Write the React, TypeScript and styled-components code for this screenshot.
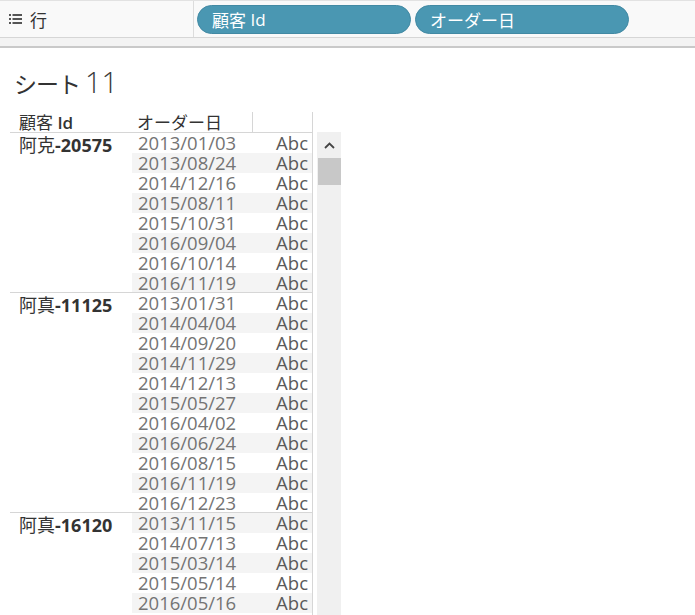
import React from "react";
import styled, { createGlobalStyle } from "styled-components";

const GlobalStyle = createGlobalStyle`
  html, body { margin: 0; padding: 0; background: #fff; overflow: hidden; }
  body { font-family: "Open Sans", "Noto Sans CJK JP", sans-serif; color: #333; }
`;

const Page = styled.div`
  width: 695px;
  height: 615px;
  overflow: hidden;
  display: flex;
  flex-direction: column;
`;

const ShelfBar = styled.div`
  height: 36px;
  border-top: 1px solid #e2e2e2;
  border-bottom: 1px solid #d6d6d6;
  background: #f9f9f9;
  display: flex;
  align-items: stretch;
`;

const ShelfLabel = styled.div`
  width: 194px;
  border-right: 1px solid #dcdcdc;
  display: flex;
  align-items: center;
  gap: 8px;
  padding-left: 9px;
  box-sizing: border-box;
  font-size: 17px;
  color: #333;
  font-family: "Noto Sans CJK JP", sans-serif;
`;

const Pills = styled.div`
  display: flex;
  align-items: center;
  gap: 4px;
  padding-left: 3px;
`;

const Pill = styled.div`
  width: 214px;
  height: 29px;
  box-sizing: border-box;
  border-radius: 15px;
  background: #4a97b2;
  border: 1px solid #4289a3;
  color: #fff;
  font-size: 17px;
  display: flex;
  align-items: center;
  padding-left: 14px;
  font-family: "Open Sans", "Noto Sans CJK JP", sans-serif;
`;

const Band = styled.div`
  height: 8px;
  background: #f3f3f3;
  border-bottom: 2px solid #c9c9c9;
`;

const Title = styled.div`
  padding: 16px 0 0 14px;
  height: 36px;
  line-height: 36px;
  font-size: 29px;
  font-weight: 300;
  color: #3a3a3a;
  margin-bottom: 12px;
  font-family: "Open Sans", "Noto Sans CJK JP", sans-serif;
`;

const TitleCjk = styled.span`
  font-family: "Noto Sans CJK JP", sans-serif;
  font-size: 23px;
  font-weight: 400;
  letter-spacing: -1px;
  margin-right: 5px;
  color: #333;
`;

const Sheet = styled.div`
  display: flex;
  align-items: flex-start;
  padding-left: 10px;
  flex: 1;
  min-height: 0;
`;

const Table = styled.div`
  width: 302px;
  border-right: 1px solid #d6d6d6;
`;

const HeaderRow = styled.div`
  display: grid;
  grid-template-columns: 122px 120px 60px;
  height: 21px;
  box-sizing: border-box;
  border-bottom: 1px solid #d6d6d6;
  font-size: 17px;
  line-height: 20px;
  color: #333;
`;

const HeaderCell = styled.div<{ $pad: number; $divider?: boolean }>`
  padding-left: ${(p) => p.$pad}px;
  border-left: ${(p) => (p.$divider ? "1px solid #d6d6d6" : "none")};
  font-weight: 600;
  white-space: nowrap;
`;

const Cjk = styled.span`
  font-family: "Noto Sans CJK JP", sans-serif;
  font-weight: 400;
`;

const Group = styled.div<{ $first?: boolean }>`
  display: flex;
  position: relative;
  border-top: ${(p) => (p.$first ? "none" : "1px solid #d6d6d6")};
  margin-top: ${(p) => (p.$first ? "0" : "-1px")};
`;

const IdCell = styled.div`
  width: 122px;
  padding-left: 9px;
  box-sizing: border-box;
  font-size: 18px;
  line-height: 22px;
  font-weight: 700;
  color: #333;
  white-space: nowrap;
`;

const Rows = styled.div`
  width: 180px;
  display: flex;
  flex-direction: column;
`;

const Row = styled.div<{ $shade: boolean }>`
  height: 20px;
  display: flex;
  justify-content: space-between;
  align-items: center;
  background: ${(p) => (p.$shade ? "#f4f4f4" : "#fff")};
  font-size: 18.5px;
  line-height: 20px;
`;

const DateText = styled.span`
  padding-left: 6px;
  color: #747474;
`;

const AbcText = styled.span`
  padding-right: 4px;
  color: #5a5a5a;
`;

const Scroll = styled.div`
  margin-top: 20px;
  margin-left: 4px;
  width: 24px;
  align-self: stretch;
  background: #f0f0f0;
  display: flex;
  flex-direction: column;
  align-items: center;
`;

const ScrollArrow = styled.div`
  height: 26px;
  width: 100%;
  display: flex;
  align-items: center;
  justify-content: center;
`;

const Thumb = styled.div`
  width: 23px;
  height: 27px;
  margin-left: 1px;
  background: #c8c8c8;
`;

const ListIcon = () => (
  <svg width="13" height="11" viewBox="0 0 13 11">
    {[1, 5, 9].map((y) => (
      <g key={y} fill="#555">
        <rect x="0" y={y - 1} width="2" height="2" />
        <rect x="3.5" y={y - 1} width="9.5" height="2" />
      </g>
    ))}
  </svg>
);

const groups: { pre: string; num: string; dates: string[] }[] = [
  {
    pre: "阿克",
    num: "-20575",
    dates: ["2013/01/03", "2013/08/24", "2014/12/16", "2015/08/11", "2015/10/31", "2016/09/04", "2016/10/14", "2016/11/19"],
  },
  {
    pre: "阿真",
    num: "-11125",
    dates: [
      "2013/01/31", "2014/04/04", "2014/09/20", "2014/11/29", "2014/12/13", "2015/05/27",
      "2016/04/02", "2016/06/24", "2016/08/15", "2016/11/19", "2016/12/23",
    ],
  },
  {
    pre: "阿真",
    num: "-16120",
    dates: ["2013/11/15", "2014/07/13", "2015/03/14", "2015/05/14", "2016/05/16", "2016/09/28"],
  },
];

export default function App() {
  let idx = 0;
  return (
    <Page>
      <GlobalStyle />
      <ShelfBar>
        <ShelfLabel>
          <ListIcon />
          <span>行</span>
        </ShelfLabel>
        <Pills>
          <Pill>
            <Cjk>顧客</Cjk>&nbsp;Id
          </Pill>
          <Pill>
            <Cjk>オーダー日</Cjk>
          </Pill>
        </Pills>
      </ShelfBar>
      <Band />
      <Title>
        <TitleCjk>シート</TitleCjk>11
      </Title>
      <Sheet>
        <Table>
          <HeaderRow>
            <HeaderCell $pad={9}>
              <Cjk>顧客</Cjk> Id
            </HeaderCell>
            <HeaderCell $pad={5}>
              <Cjk>オーダー日</Cjk>
            </HeaderCell>
            <HeaderCell $pad={0} $divider />
          </HeaderRow>
          {groups.map((g, gi) => (
            <Group key={gi} $first={gi === 0}>
              <IdCell>
                <Cjk>{g.pre}</Cjk>
                {g.num}
              </IdCell>
              <Rows>
                {g.dates.map((d) => {
                  const i = idx++;
                  return (
                    <Row key={d + i} $shade={i % 2 === 1}>
                      <DateText>{d}</DateText>
                      <AbcText>Abc</AbcText>
                    </Row>
                  );
                })}
              </Rows>
            </Group>
          ))}
        </Table>
        <Scroll>
          <ScrollArrow>
            <svg width="11" height="7" viewBox="0 0 11 7">
              <path d="M1 6 L5.5 1.5 L10 6" fill="none" stroke="#444" strokeWidth="1.8" />
            </svg>
          </ScrollArrow>
          <Thumb />
        </Scroll>
      </Sheet>
    </Page>
  );
}
